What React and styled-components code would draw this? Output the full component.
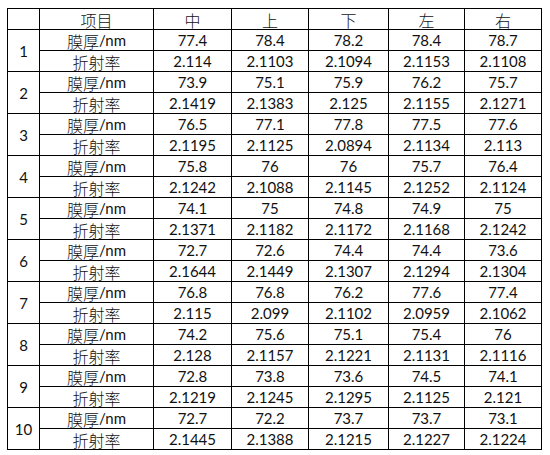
import { Fragment } from "react";
import styled, { createGlobalStyle } from "styled-components";

const GlobalStyle = createGlobalStyle`
  html, body {
    margin: 0;
    padding: 0;
    background: #fff;
  }
`;

const positions = ["中", "上", "下", "左", "右"];

const data = [
  [["77.4", "78.4", "78.2", "78.4", "78.7"], ["2.114", "2.1103", "2.1094", "2.1153", "2.1108"]],
  [["73.9", "75.1", "75.9", "76.2", "75.7"], ["2.1419", "2.1383", "2.125", "2.1155", "2.1271"]],
  [["76.5", "77.1", "77.8", "77.5", "77.6"], ["2.1195", "2.1125", "2.0894", "2.1134", "2.113"]],
  [["75.8", "76", "76", "75.7", "76.4"], ["2.1242", "2.1088", "2.1145", "2.1252", "2.1124"]],
  [["74.1", "75", "74.8", "74.9", "75"], ["2.1371", "2.1182", "2.1172", "2.1168", "2.1242"]],
  [["72.7", "72.6", "74.4", "74.4", "73.6"], ["2.1644", "2.1449", "2.1307", "2.1294", "2.1304"]],
  [["76.8", "76.8", "76.2", "77.6", "77.4"], ["2.115", "2.099", "2.1102", "2.0959", "2.1062"]],
  [["74.2", "75.6", "75.1", "75.4", "76"], ["2.128", "2.1157", "2.1221", "2.1131", "2.1116"]],
  [["72.8", "73.8", "73.6", "74.5", "74.1"], ["2.1219", "2.1245", "2.1295", "2.1125", "2.121"]],
  [["72.7", "72.2", "73.7", "73.7", "73.1"], ["2.1445", "2.1388", "2.1215", "2.1227", "2.1224"]],
];

const widths = [32, 114, 78, 77, 80, 76, 77];

const Page = styled.div`
  padding: 8px 0 0 7px;
`;

const Table = styled.table`
  border-collapse: collapse;
  table-layout: fixed;
  width: 535px;
  font-family: "Lato", "Noto Sans CJK SC", sans-serif;
  font-size: 15px;
  color: #111;
`;

const Cell = styled.td`
  border: 1px solid #000;
  padding: 0;
  vertical-align: middle;
`;

const Inner = styled.div`
  height: ${(p) => (p.$tall ? "41px" : "20px")};
  display: flex;
  align-items: center;
  justify-content: center;
  padding-top: 1px;
  box-sizing: border-box;
  line-height: 1;
  white-space: nowrap;
  font-family: ${(p) => (p.$cjk ? '"Noto Sans CJK SC", sans-serif' : "inherit")};
  font-size: ${(p) => (p.$cjk ? "16px" : "15px")};
  font-weight: ${(p) => (p.$cjk ? 300 : 400)};
`;

const Label = styled.span`
  font-family: "Noto Sans CJK SC", sans-serif;
  font-size: 16px;
  font-weight: 300;
`;

const Unit = styled.span`
  font-family: "Lato", sans-serif;
  font-size: 15px;
`;

export default function App() {
  return (
    <>
      <GlobalStyle />
      <Page>
        <Table>
          <colgroup>
            {widths.map((w, i) => (
              <col key={i} style={{ width: w }} />
            ))}
          </colgroup>
          <tbody>
            <tr>
              <Cell>
                <Inner />
              </Cell>
              <Cell>
                <Inner $cjk>项目</Inner>
              </Cell>
              {positions.map((p) => (
                <Cell key={p}>
                  <Inner $cjk>{p}</Inner>
                </Cell>
              ))}
            </tr>
            {data.map(([thick, refr], i) => (
              <Fragment key={i}>
                <tr>
                  <Cell rowSpan={2}>
                    <Inner $tall>{i + 1}</Inner>
                  </Cell>
                  <Cell>
                    <Inner>
                      <Label>膜厚</Label>
                      <Unit>/nm</Unit>
                    </Inner>
                  </Cell>
                  {thick.map((v, j) => (
                    <Cell key={j}>
                      <Inner>{v}</Inner>
                    </Cell>
                  ))}
                </tr>
                <tr>
                  <Cell>
                    <Inner $cjk>折射率</Inner>
                  </Cell>
                  {refr.map((v, j) => (
                    <Cell key={j}>
                      <Inner>{v}</Inner>
                    </Cell>
                  ))}
                </tr>
              </Fragment>
            ))}
          </tbody>
        </Table>
      </Page>
    </>
  );
}
